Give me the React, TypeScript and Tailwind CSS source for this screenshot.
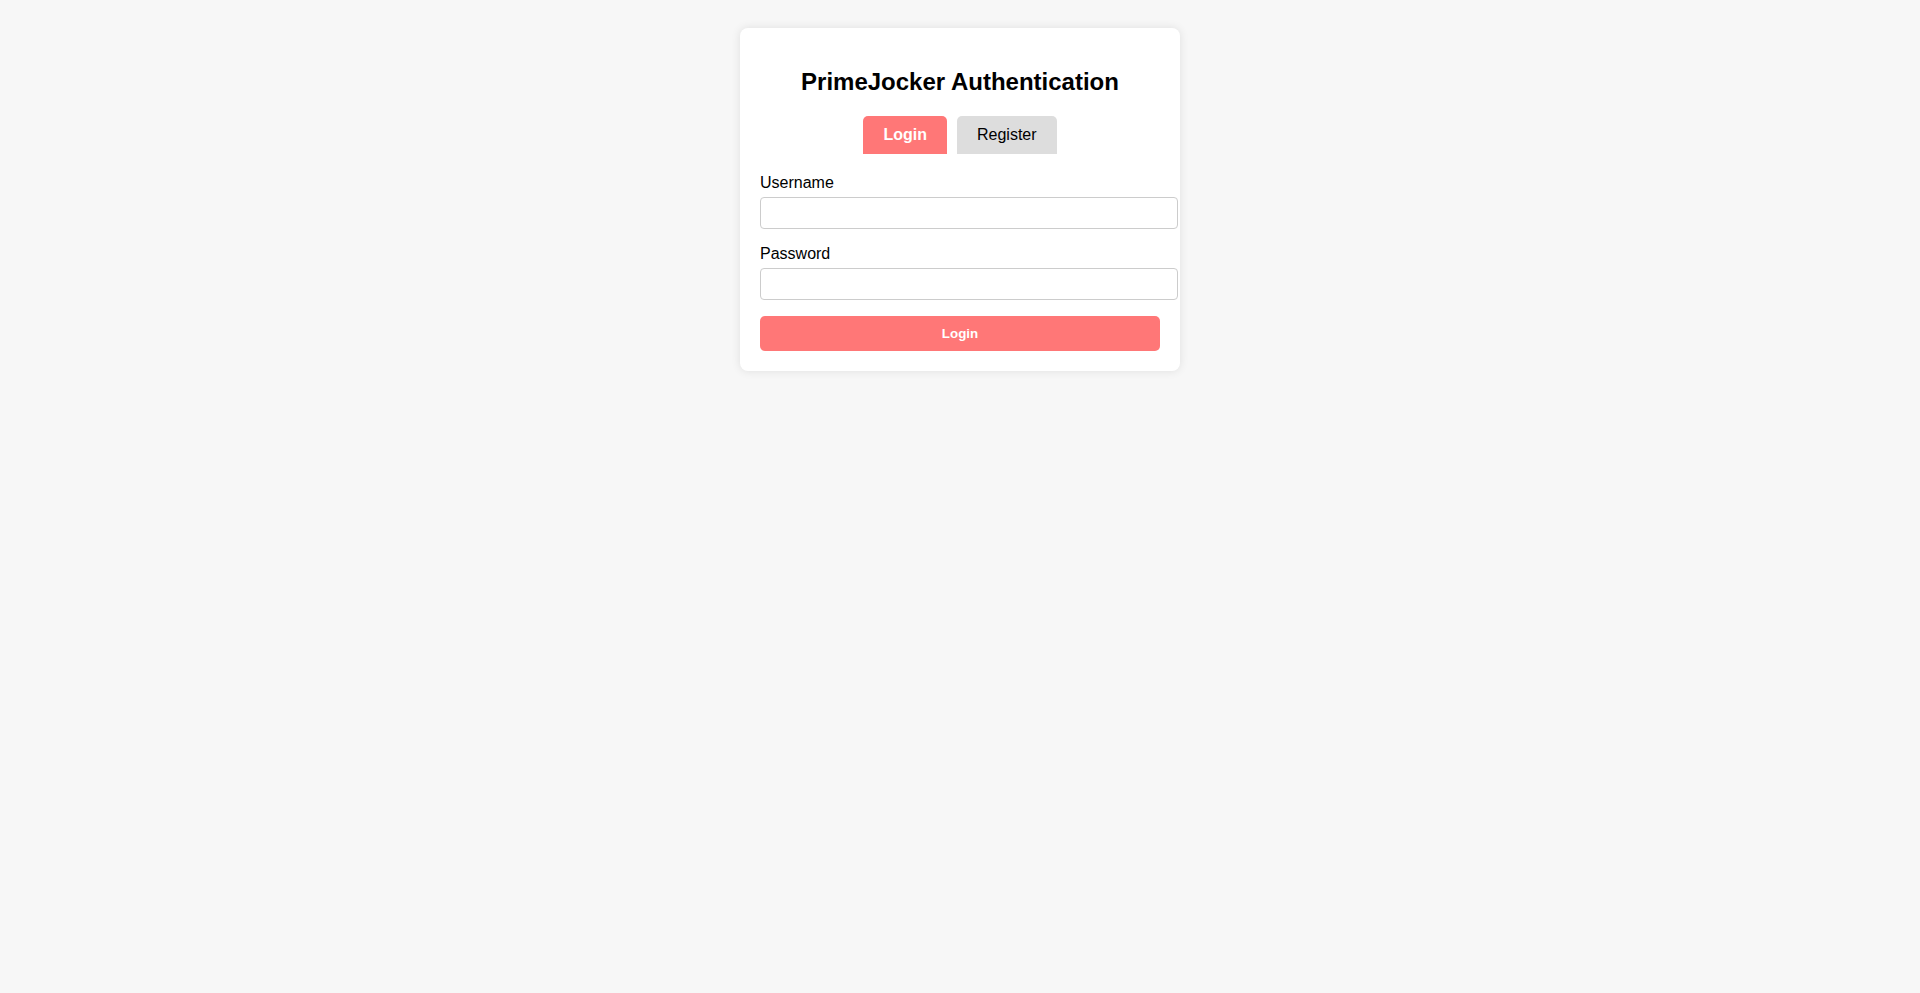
import React from "react";

export default function App() {
  return (
    <div className="min-h-[993px] w-full bg-[#f7f7f7] pt-[28px] font-['Liberation_Sans',Arial,sans-serif] text-black">
      <div className="mx-auto w-[440px] rounded-[8px] bg-white px-[20px] pt-[20px] pb-[20px] shadow-[0_0_10px_rgba(0,0,0,0.1)]">
        <h2 className="mt-[20px] mb-[20px] text-center text-[24px] font-bold leading-[28px]">
          PrimeJocker Authentication
        </h2>
        <div className="mb-[20px] flex justify-center gap-[10px]">
          <button className="h-[38px] rounded-t-[5px] bg-[#ff7777] px-[20px] text-[16px] font-bold leading-[18px] text-white">
            Login
          </button>
          <button className="h-[38px] rounded-t-[5px] bg-[#dddddd] px-[20px] text-[16px] leading-[18px] text-black">
            Register
          </button>
        </div>
        <div className="mb-[16px]">
          <label className="mb-[5px] block text-[16px] leading-[18px]">Username</label>
          <input
            type="text"
            className="box-content block h-[14px] w-full rounded-[4px] border border-[#cccccc] bg-white px-[8px] py-[8px] text-[13px] outline-none"
          />
        </div>
        <div className="mb-[16px]">
          <label className="mb-[5px] block text-[16px] leading-[18px]">Password</label>
          <input
            type="password"
            className="box-content block h-[14px] w-full rounded-[4px] border border-[#cccccc] bg-white px-[8px] py-[8px] text-[13px] outline-none"
          />
        </div>
        <button className="block h-[35px] w-full rounded-[5px] bg-[#ff7777] text-[13.33px] font-bold text-white">
          Login
        </button>
      </div>
    </div>
  );
}
